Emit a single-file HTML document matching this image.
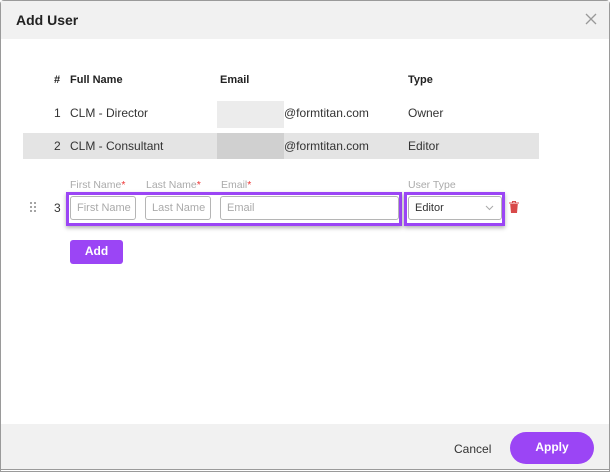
<!DOCTYPE html>
<html><head><style>
*{box-sizing:border-box;margin:0;padding:0}
body{width:610px;height:472px;background:#fff;font-family:"Liberation Sans",sans-serif;position:relative;overflow:hidden;color:#333}
.frame{position:absolute;left:0;top:0;width:610px;height:472px;border:1px solid #9a9a9a;border-radius:4px 4px 0 0}
.hdr{position:absolute;left:1px;top:1px;width:608px;height:38px;background:#f1f1f1}
.t{position:absolute;font-size:12px;white-space:nowrap}
.ftr{position:absolute;left:1px;top:424px;width:608px;height:46px;background:#f1f1f1;border-bottom:1px solid #9a9a9a}
.inp{position:absolute;top:196px;height:24px;border:1px solid #b5b5b5;border-radius:3px;background:#fff;font-size:11px;color:#aaa;padding:5px 0 0 6px;white-space:nowrap;overflow:hidden}
.lbl{position:absolute;top:179px;font-size:10.5px;color:#aaa}
.lbl b{color:#e33;font-weight:normal}
</style></head><body>
<div class="frame"></div>
<div class="hdr"></div>
<div class="t" style="left:16px;top:12px;font-size:14px;font-weight:bold;color:#222">Add User</div>
<svg style="position:absolute;left:585px;top:13px" width="12" height="12"><path d="M1 1L11 11M11 1L1 11" stroke="#999" stroke-width="1.3"/></svg>

<div class="t" style="left:54px;top:74px;font-weight:bold;font-size:11px;color:#222">#</div>
<div class="t" style="left:70px;top:74px;font-weight:bold;font-size:11px;color:#222">Full Name</div>
<div class="t" style="left:220px;top:74px;font-weight:bold;font-size:11px;color:#222">Email</div>
<div class="t" style="left:408px;top:74px;font-weight:bold;font-size:11px;color:#222">Type</div>

<div style="position:absolute;left:217px;top:101px;width:67px;height:27px;background:#ececec"></div>
<div class="t" style="left:54px;top:106px">1</div>
<div class="t" style="left:70px;top:106px">CLM - Director</div>
<div class="t" style="left:284px;top:106px">@formtitan.com</div>
<div class="t" style="left:408px;top:106px">Owner</div>

<div style="position:absolute;left:23px;top:133px;width:516px;height:26px;background:#e4e4e4"></div>
<div style="position:absolute;left:217px;top:133px;width:67px;height:26px;background:#d0d0d0"></div>
<div class="t" style="left:54px;top:139px">2</div>
<div class="t" style="left:70px;top:139px">CLM - Consultant</div>
<div class="t" style="left:284px;top:139px">@formtitan.com</div>
<div class="t" style="left:408px;top:139px">Editor</div>

<div class="lbl" style="left:70px">First Name<b>*</b></div>
<div class="lbl" style="left:146px">Last Name<b>*</b></div>
<div class="lbl" style="left:221px">Email<b>*</b></div>
<div class="lbl" style="left:408px">User Type</div>

<div style="position:absolute;left:28px;top:200px;width:10px;height:12px">
<svg width="10" height="12"><g fill="#888"><circle cx="3" cy="2" r="1"/><circle cx="7" cy="2" r="1"/><circle cx="3" cy="6" r="1"/><circle cx="7" cy="6" r="1"/><circle cx="3" cy="10" r="1"/><circle cx="7" cy="10" r="1"/></g></svg></div>
<div class="t" style="left:54px;top:201px">3</div>

<div style="position:absolute;left:66px;top:192px;width:336px;height:34px;border:3px solid #9b45f5;box-shadow:0 2px 4px rgba(0,0,0,.3)"></div>
<div style="position:absolute;left:404px;top:192px;width:101px;height:34px;border:3px solid #9b45f5;box-shadow:0 2px 4px rgba(0,0,0,.3)"></div>
<div class="inp" style="left:70px;width:66px">First Name</div>
<div class="inp" style="left:145px;width:66px">Last Name</div>
<div class="inp" style="left:220px;width:179px">Email</div>
<div class="inp" style="left:408px;width:94px;color:#333">Editor</div>
<svg style="position:absolute;left:485px;top:205px" width="9" height="6"><path d="M1 1L4.5 4.5L8 1" stroke="#aaa" fill="none"/></svg>
<svg style="position:absolute;left:509px;top:201px" width="10" height="12"><path d="M0 2H10M3.5 2V0.5H6.5V2" stroke="#d84a4a" fill="none"/><path d="M1.2 3H8.8L8 12H2Z" fill="#d84a4a"/></svg>

<div style="position:absolute;left:70px;top:240px;width:53px;height:24px;background:#9b45f5;border-radius:3px;color:#fff;font-size:12px;font-weight:bold;text-align:center;line-height:23px">Add</div>

<div class="ftr"></div>
<div class="t" style="left:454px;top:442px;color:#333">Cancel</div>
<div style="position:absolute;left:510px;top:432px;width:84px;height:32px;background:#9b45f5;border-radius:16px;color:#fff;font-size:12px;font-weight:bold;text-align:center;line-height:30px">Apply</div>
</body></html>
